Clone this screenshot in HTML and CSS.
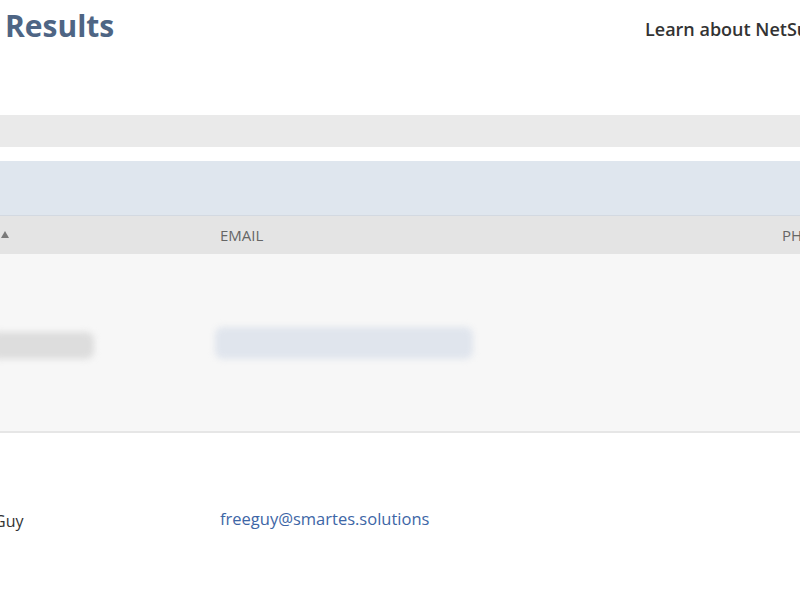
FILE: index.html
```html
<!DOCTYPE html>
<html>
<head>
<meta charset="utf-8">
<link rel="stylesheet" href="styles.css">
</head>
<body>
<div class="page">
  <header class="top">
    <h1 class="title">Results</h1>
    <a class="learn">Learn about NetSuite</a>
  </header>
  <div class="filterbar"></div>
  <div class="toolbar"></div>
  <div class="thead">
    <div class="th sort"><svg width="10" height="9" viewBox="0 0 10 9"><polygon points="5,1 9,8 1,8" fill="#7a7a7a"/></svg></div>
    <div class="th">EMAIL</div>
    <div class="th">PHONE</div>
  </div>
  <div class="row shaded">
    <div class="cell"><div class="blob gray"></div></div>
    <div class="cell"><div class="blob blue"></div></div>
    <div class="cell"></div>
  </div>
  <div class="row plain">
    <div class="cell name">Guy</div>
    <div class="cell"><a class="mail">freeguy@smartes.solutions</a></div>
    <div class="cell"></div>
  </div>
</div>
</body>
</html>
```
FILE: styles.css
```css
html, body {
  margin: 0;
  padding: 0;
  background: #ffffff;
  overflow: hidden;
}
body {
  font-family: "Open Sans", "Liberation Sans", sans-serif;
  width: 800px;
  height: 600px;
}
.page {
  width: 800px;
}
.top {
  display: grid;
  grid-template-columns: 645px auto;
  align-items: start;
  height: 115px;
  white-space: nowrap;
}
.title {
  margin: 0;
  padding: 4px 0 0 5px;
  font-size: 30px;
  line-height: 44px;
  font-weight: 700;
  color: #4e6584;
}
.learn {
  padding-top: 14px;
  font-size: 18px;
  line-height: 30px;
  font-weight: 600;
  color: #333333;
}
.filterbar {
  height: 32px;
  background: #eaeaea;
}
.toolbar {
  margin-top: 14px;
  height: 54px;
  background: #dfe6ee;
}
.thead {
  display: grid;
  grid-template-columns: 220px 562px auto;
  height: 38px;
  border-top: 1px solid #d3d9e1;
  background: #e4e4e4;
  align-items: center;
  white-space: nowrap;
}
.th {
  font-size: 15px;
  color: #666666;
}
.sort svg {
  display: block;
  margin-top: -2px;
}
.row {
  display: grid;
  grid-template-columns: 220px 562px auto;
  align-items: center;
}
.shaded {
  height: 177px;
  background: #f7f7f7;
  border-bottom: 2px solid #e6e6e6;
}
.plain {
  height: 176px;
  background: #ffffff;
}
.cell {
  font-size: 16px;
  color: #333333;
}
.blob {
  filter: blur(3px);
  border-radius: 8px;
}
.blob.gray {
  width: 104px;
  height: 27px;
  margin-left: -10px;
  margin-top: 6px;
  background: #dddddd;
}
.blob.blue {
  width: 258px;
  height: 32px;
  margin-left: -5px;
  margin-top: 0;
  background: #e0e5ed;
}
.name {
  margin-left: -6px;
  margin-top: 0;
}
.mail {
  font-size: 16.5px;
  color: #3d66a6;
  text-decoration: none;
  position: relative;
  top: -3px;
}
```
